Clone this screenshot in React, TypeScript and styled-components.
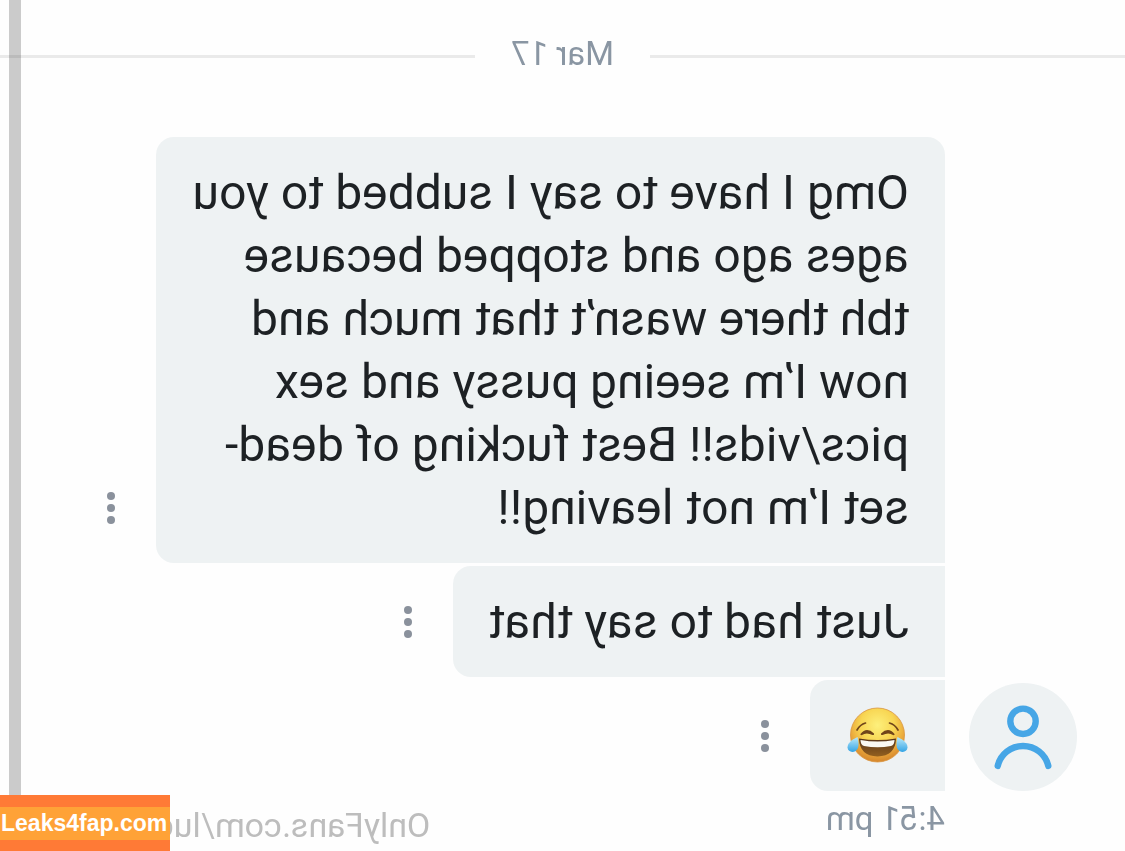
import React from 'react';
import styled, { createGlobalStyle } from 'styled-components';

const GlobalStyle = createGlobalStyle`
  * { box-sizing: border-box; }
  body {
    margin: 0;
    background: #fefefe;
    font-family: Roboto, "Liberation Sans", sans-serif;
  }
`;

const Page = styled.div`
  position: relative;
  min-height: 100vh;
  overflow: hidden;
`;

/* The whole conversation is shown flipped left to right. */
const Chat = styled.main`
  min-height: 100vh;
  padding-top: 34px;
  transform: scaleX(-1);
`;

const DateDivider = styled.div`
  display: flex;
  align-items: center;
  gap: 36px;
  margin-bottom: 59px;
  &::before,
  &::after {
    content: '';
    flex: 1;
    height: 3px;
    background: #eaeaea;
  }
`;

const DateLabel = styled.time`
  padding-bottom: 4px;
  font-size: 33px;
  line-height: 40px;
  color: #8a96a3;
`;

const Group = styled.section`
  display: flex;
  align-items: flex-end;
  gap: 24px;
  padding-left: 48px;
`;

const Avatar = styled.a`
  flex: none;
  display: block;
  width: 108px;
  height: 108px;
  border-radius: 50%;
  background: #eef2f3;
`;

const Messages = styled.div`
  flex: 1;
  min-width: 0;
  display: flex;
  flex-direction: column;
  gap: 3px;
`;

const Row = styled.div`
  display: flex;
  align-items: flex-end;
`;

const Bubble = styled.div<{ $first?: boolean }>`
  max-width: 789px;
  padding: 24px 36px;
  border-radius: ${(p) => (p.$first ? '18px' : '0')} 18px 18px 0;
  background: #eef2f3;
  color: #1d2124;
  font-size: 48px;
  line-height: 63px;
`;

const MenuButton = styled.button`
  flex: none;
  display: flex;
  align-items: center;
  justify-content: center;
  width: 90px;
  height: 111px;
  padding: 0;
  border: 0;
  background: none;
  color: #8a919c;
`;

const EmojiIcon = styled.svg`
  display: block;
  width: 63px;
  height: 63px;
`;

const SentAt = styled.time`
  display: block;
  margin-top: 8px;
  padding-left: 180px;
  font-size: 33px;
  line-height: 40px;
  color: #8a96a3;
`;

const Watermark = styled.span`
  position: absolute;
  right: 156px;
  bottom: 6px;
  white-space: nowrap;
  font-size: 34px;
  line-height: 40px;
  color: #bdbdbd;
`;

const Scrollbar = styled.div`
  position: absolute;
  top: 0;
  bottom: 0;
  left: 9px;
  width: 12px;
  background: rgba(0, 0, 0, 0.2);
`;

const Banner = styled.a`
  position: absolute;
  left: 0;
  bottom: 0;
  padding: 12px 0 11px;
  width: 170px;
  background: #ff7a36;
  text-decoration: none;
`;

const BannerText = styled.span`
  display: block;
  padding-left: 1px;
  background: #ffa237;
  color: #fff;
  font-family: "Liberation Sans", sans-serif;
  font-size: 23px;
  font-weight: 700;
  line-height: 33px;
  white-space: nowrap;
`;

const Person = () => (
  <svg width="108" height="108" viewBox="0 0 108 108" fill="none" stroke="#46a6e6" aria-hidden="true">
    <circle cx="54" cy="38.3" r="12.7" strokeWidth="6.4" />
    <path d="M28.7 83a26 26 0 0 1 50.6 0" strokeWidth="6.4" strokeLinecap="round" />
  </svg>
);

const JoyEmoji = () => (
  <EmojiIcon viewBox="0 0 63 63" role="img" aria-label="face with tears of joy">
    <defs>
      <radialGradient id="face" cx="0.5" cy="0.32" r="0.7">
        <stop offset="0" stopColor="#fdf07c" />
        <stop offset="0.45" stopColor="#f8d653" />
        <stop offset="0.75" stopColor="#e9a63a" />
        <stop offset="1" stopColor="#d2812a" />
      </radialGradient>
      <linearGradient id="mouth" x1="0" y1="0" x2="0" y2="1">
        <stop offset="0" stopColor="#56341a" />
        <stop offset="1" stopColor="#94601f" />
      </linearGradient>
      <linearGradient id="tear" x1="0" y1="0" x2="0" y2="1">
        <stop offset="0" stopColor="#bceafa" />
        <stop offset="1" stopColor="#35a5e5" />
      </linearGradient>
    </defs>
    <circle cx="31.5" cy="31" r="27" fill="url(#face)" stroke="#d9943c" strokeWidth="0.8" />
    <g fill="none" stroke="#70451a" strokeWidth="1.7" strokeLinecap="round">
      <path d="M11 26Q14 20.500 19.500 19M52 26Q49 20.500 43.500 19" />
    </g>
    <path
      d="M14.500 30Q20.500 22.500 28 29.500Q28.500 31.500 26.500 31Q20.500 28 16 31Q14 31.500 14.500 30ZM48.500 30Q42.500 22.500 35 29.500Q34.500 31.500 36.500 31Q42.500 28 47 31Q49 31.500 48.500 30Z"
      fill="#70451a"
    />
    <path d="M13 34.500Q31.500 37.500 50 34.500Q49.500 52 31.500 52.500Q13.500 52 13 34.500Z" fill="url(#mouth)" />
    <path d="M14.500 36Q31.500 39 48.500 36Q48.500 41 45 42Q31.500 44.500 18 42Q14.500 41 14.500 36Z" fill="#faf8f2" />
    <path d="M11.500 33C5 36 1.500 39.500 1.500 43.500C2 49 9.500 49.500 12 44C13 40.500 12.500 36.500 11.500 33Z" fill="url(#tear)" />
    <path d="M51.500 33C58 36 61.500 39.500 61.500 43.500C61 49 53.500 49.500 51 44C50 40.500 50.500 36.500 51.500 33Z" fill="url(#tear)" />
  </EmojiIcon>
);

const messages: React.ReactNode[] = [
  'Omg I have to say I subbed to you ages ago and stopped because tbh there wasn’t that much and now I’m seeing pussy and sex pics/vids!! Best fucking of dead-set I’m not leaving!!',
  'Just had to say that',
  <JoyEmoji key="joy" />,
];

export default function App() {
  return (
    <Page>
      <GlobalStyle />
      <Chat>
        <DateDivider>
          <DateLabel>Mar 17</DateLabel>
        </DateDivider>
        <Group>
          <Avatar href="#profile" aria-label="Profile">
            <Person />
          </Avatar>
          <Messages>
            {messages.map((message, i) => (
              <Row key={i}>
                <Bubble $first={i === 0}>{message}</Bubble>
                <MenuButton aria-label="Message options">
                  <svg width="8" height="32" viewBox="0 0 8 32" fill="currentColor" aria-hidden="true">
                    <circle cx="4" cy="4" r="4" />
                    <circle cx="4" cy="16" r="4" />
                    <circle cx="4" cy="28" r="4" />
                  </svg>
                </MenuButton>
              </Row>
            ))}
          </Messages>
        </Group>
        <SentAt>4:51 pm</SentAt>
        <Watermark>OnlyFans.com/luc</Watermark>
      </Chat>
      <Scrollbar />
      <Banner href="#home">
        <BannerText>Leaks4fap.com</BannerText>
      </Banner>
    </Page>
  );
}
